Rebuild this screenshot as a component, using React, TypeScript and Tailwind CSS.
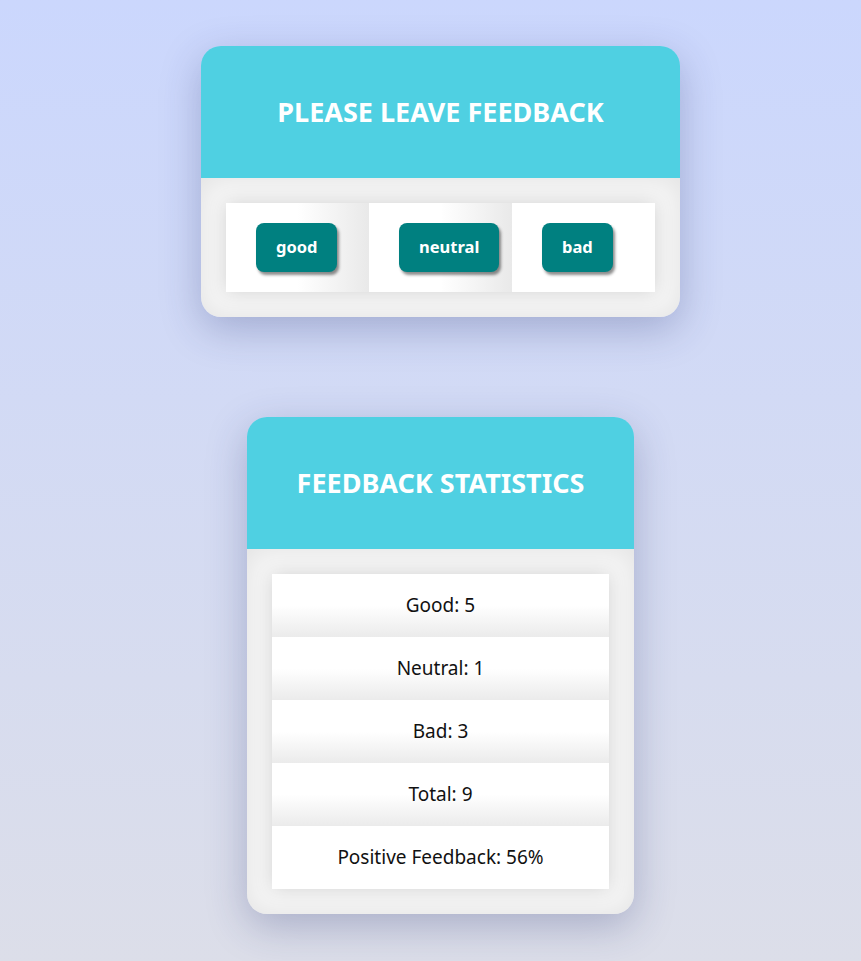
import React from 'react';

const OPTIONS = ['good', 'neutral', 'bad'];

const STATS = [
  { label: 'Good', value: '5' },
  { label: 'Neutral', value: '1' },
  { label: 'Bad', value: '3' },
  { label: 'Total', value: '9' },
  { label: 'Positive Feedback', value: '56%' },
];

function Section({ title, width, children }: { title: string; width: string; children: React.ReactNode }) {
  return (
    <section
      className={`${width} overflow-hidden rounded-[20px] shadow-[0_12px_40px_rgba(40,50,110,0.28)]`}
    >
      <div className="flex h-[132px] items-center justify-center bg-[#4fd0e2]">
        <h2 className="text-[27px] font-bold uppercase text-white">{title}</h2>
      </div>
      <div className="bg-[#f7f7f7] p-[25px] shadow-[inset_0_0_30px_rgba(0,0,0,0.09)]">{children}</div>
    </section>
  );
}

export default function App() {
  return (
    <div
      className="min-h-[961px] bg-gradient-to-b from-[#cbd7fd] to-[#dcdee9] pt-[46px] pl-[20px] text-[#111]"
      style={{ fontFamily: '"Noto Sans", "Open Sans", sans-serif' }}
    >
      <div className="flex flex-col items-center gap-[100px]">
        <Section title="Please leave feedback" width="w-[479px]">
          <ul className="flex shadow-[0_0_18px_rgba(0,0,0,0.14)]">
            {OPTIONS.map((opt, i) => (
              <li
                key={opt}
                className={`flex h-[89px] w-[143px] items-center pl-[30px] ${
                  i < 2 ? 'bg-gradient-to-r from-white via-white to-[#e9e9e9]' : 'bg-white'
                }`}
              >
                <button
                  type="button"
                  className="h-[49px] rounded-lg bg-[#008080] px-[20px] text-[16.5px] font-bold text-white shadow-[2px_3px_3px_rgba(0,0,0,0.45)]"
                >
                  {opt}
                </button>
              </li>
            ))}
          </ul>
        </Section>

        <Section title="Feedback statistics" width="w-[387px]">
          <ul className="shadow-[0_0_18px_rgba(0,0,0,0.14)]">
            {STATS.map((s, i) => (
              <li
                key={s.label}
                className={`flex h-[63px] items-center justify-center text-[19px] ${
                  i < STATS.length - 1 ? 'bg-gradient-to-b from-white via-white to-[#ebebeb]' : 'bg-white'
                }`}
              >
                {s.label}: {s.value}
              </li>
            ))}
          </ul>
        </Section>
      </div>
    </div>
  );
}
